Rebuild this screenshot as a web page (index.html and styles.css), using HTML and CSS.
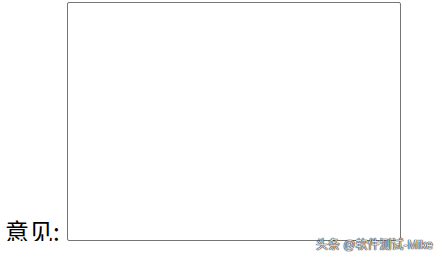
FILE: index.html
```html
<!DOCTYPE html>
<html lang="zh-CN">
<head>
    <meta charset="UTF-8">
    <meta name="viewport" content="width=device-width, initial-scale=1.0">
    <title>意见</title>
    <link rel="stylesheet" href="styles.css">
</head>
<body>
    <div class="form-row">
        <label class="field-label" for="opinion">意见:</label>
        <textarea id="opinion" class="opinion-box"></textarea>
    </div>
    <div class="watermark">头条 @软件测试-Mike</div>
</body>
</html>
```

FILE: styles.css
```css
body {
    margin: 0;
    padding: 2px 0 0 5px;
    font-family: "Noto Sans CJK SC", "Liberation Sans", sans-serif;
    background: #fff;
    color: #000;
    overflow: hidden;
}

.form-row {
    display: flex;
    align-items: flex-end;
    gap: 7px;
}

.field-label {
    font-size: 24px;
    line-height: 28px;
    margin-bottom: -4px;
}

.opinion-box {
    width: 334px;
    height: 239px;
    box-sizing: border-box;
    margin: 0;
    padding: 2px;
    border: 1px solid #767676;
    border-radius: 2px;
    resize: none;
}

.watermark {
    position: absolute;
    left: 316px;
    top: 237px;
    font-size: 12px;
    line-height: 16px;
    white-space: nowrap;
    color: #e8e8e8;
    text-shadow: 0 0 1px #222, 0 0 1px #222, 0 0 1px #222;
    font-family: "Liberation Sans", "Noto Sans CJK SC", sans-serif;
}
```
